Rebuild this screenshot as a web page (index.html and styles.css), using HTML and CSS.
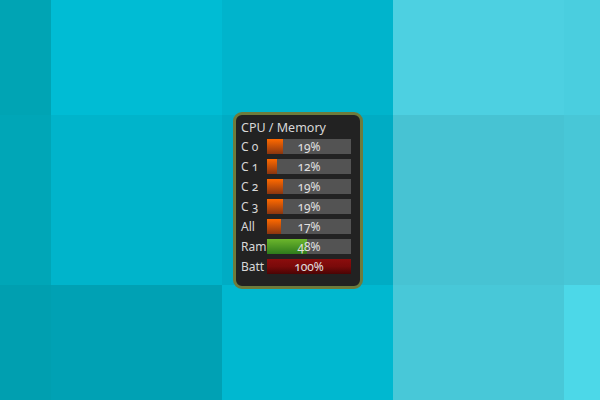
FILE: index.html
```html
<!DOCTYPE html>
<html lang="en">

<head>
    <meta charset="UTF-8">
    <meta name="viewport" content="width=device-width, initial-scale=1.0">
    <title>CPU / Memory Gadget</title>
    <link rel="stylesheet" href="styles.css">
</head>

<body>
    <div class="desktop">
        <div class="tile t1"></div>
        <div class="tile t2"></div>
        <div class="tile t3"></div>
        <div class="tile t4"></div>
        <div class="tile t5"></div>
        <div class="tile t6"></div>
        <div class="tile t7"></div>
        <div class="tile t8"></div>
        <div class="tile t9"></div>
        <div class="tile t10"></div>
        <div class="tile t11"></div>
        <div class="tile t12"></div>
        <div class="tile t13"></div>
        <div class="tile t14"></div>
        <div class="tile t15"></div>

        <div class="gadget">
            <div class="title">CPU / Memory</div>
            <div class="meters">
                <div class="meter">
                    <span class="label">C 0</span>
                    <div class="bar"><div class="fill cpu" style="width: 19%"></div><span class="value">19%</span></div>
                </div>
                <div class="meter">
                    <span class="label">C 1</span>
                    <div class="bar"><div class="fill cpu" style="width: 12%"></div><span class="value">12%</span></div>
                </div>
                <div class="meter">
                    <span class="label">C 2</span>
                    <div class="bar"><div class="fill cpu" style="width: 19%"></div><span class="value">19%</span></div>
                </div>
                <div class="meter">
                    <span class="label">C 3</span>
                    <div class="bar"><div class="fill cpu" style="width: 19%"></div><span class="value">19%</span></div>
                </div>
                <div class="meter">
                    <span class="label">All</span>
                    <div class="bar"><div class="fill cpu" style="width: 17%"></div><span class="value">17%</span></div>
                </div>
                <div class="meter">
                    <span class="label">Ram</span>
                    <div class="bar"><div class="fill ram" style="width: 48%"></div><span class="value">48%</span></div>
                </div>
                <div class="meter">
                    <span class="label">Batt</span>
                    <div class="bar"><div class="fill batt" style="width: 100%"></div><span class="value">100%</span></div>
                </div>
            </div>
        </div>
    </div>
</body>

</html>
```

FILE: styles.css
```css
body {
    margin: 0;
    font-family: "Noto Sans", "Open Sans", sans-serif;
}

.desktop {
    position: relative;
    width: 600px;
    height: 400px;
    display: grid;
    grid-template-columns: 51px 171px 171px 171px 1fr;
    grid-template-rows: 115px 170px 1fr;
    overflow: hidden;
}

/* background mosaic */
.t1 { background: #00a4b4; }
.t2 { background: #00bcd4; }
.t3 { background: #00b4cc; }
.t4 { background: #4dd0e1; }
.t5 { background: #4acedf; }
.t6 { background: #00a6b7; }
.t7 { background: #00b4cb; }
.t8 { background: #00acc4; }
.t9 { background: #47c3d3; }
.t10 { background: #48c7d7; }
.t11 { background: #009fb0; }
.t12 { background: #00a1b4; }
.t13 { background: #00b8d0; }
.t14 { background: #48c8d8; }
.t15 { background: #4cd8e8; }

.gadget {
    position: absolute;
    left: 233px;
    top: 112px;
    width: 124px;
    height: 168px;
    padding: 3px 0 0 0;
    box-sizing: content-box;
    background: #222222;
    border: 3px solid #6e7b3c;
    border-radius: 9px;
    color: #d8d8d8;
    font-size: 12px;
    font-variant-numeric: oldstyle-nums;
}

.title {
    padding-left: 5px;
    line-height: 20px;
    font-size: 12.5px;
    margin-bottom: 1px;
}

.meters {
    display: flex;
    flex-direction: column;
    gap: 5px;
}

.meter {
    display: flex;
    align-items: center;
    height: 15px;
    line-height: 15px;
}

.label {
    width: 26px;
    padding-left: 5px;
    white-space: nowrap;
}

.bar {
    position: relative;
    width: 84px;
    height: 15px;
    background: #535353;
}

.fill {
    height: 100%;
}

.cpu {
    background: linear-gradient(#ff6a00, #8a3510);
}

.ram {
    background: linear-gradient(#6cb62c, #2e7a1c);
}

.batt {
    background: linear-gradient(#8c0d0d, #7a0a0a 50%, #4a0404);
}

.value {
    position: absolute;
    left: 0;
    right: 0;
    top: 0;
    text-align: center;
    color: #e0e0e0;
}
```
